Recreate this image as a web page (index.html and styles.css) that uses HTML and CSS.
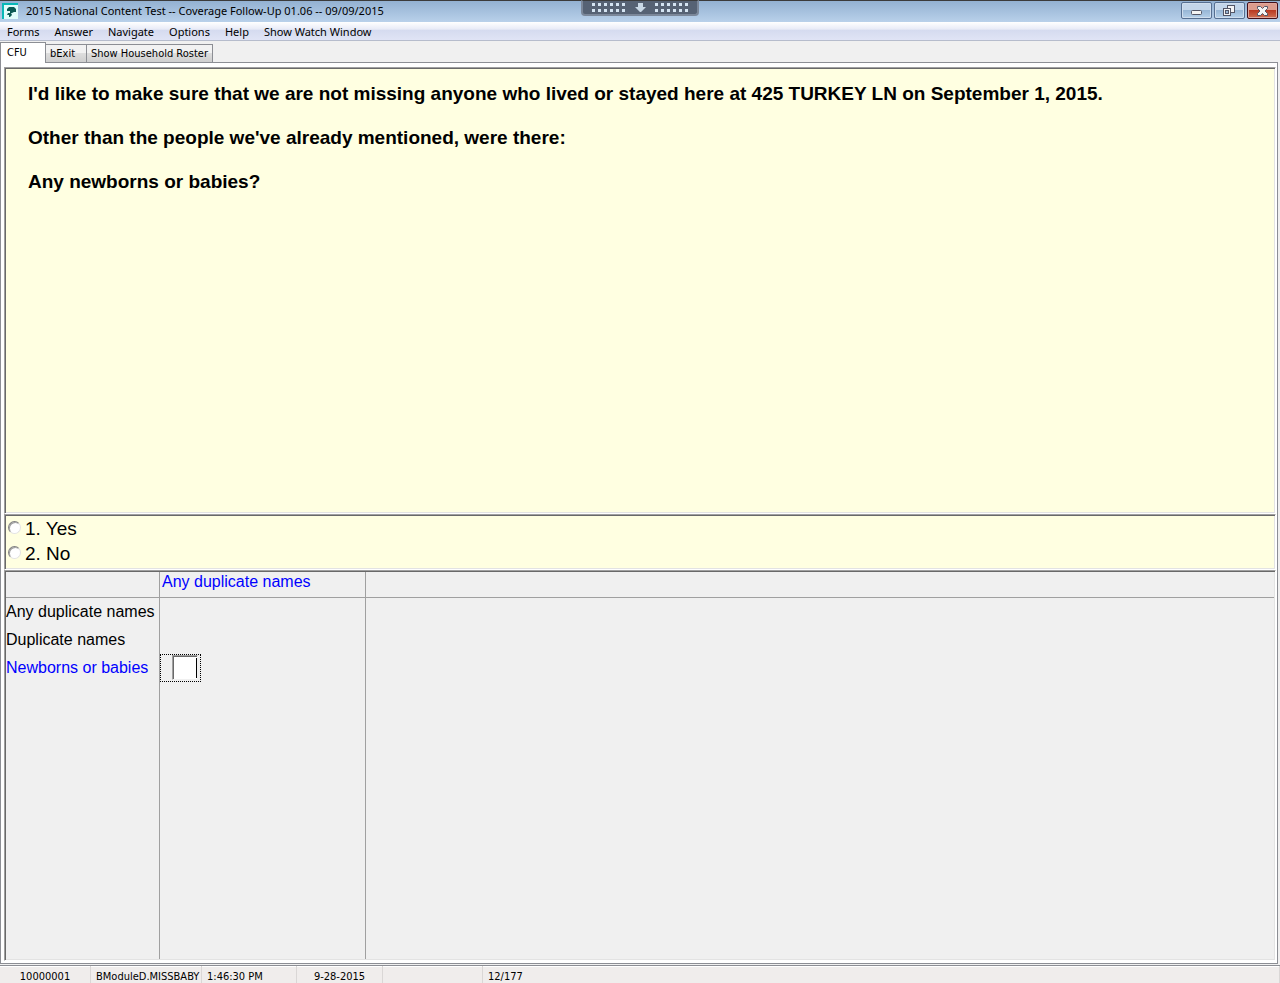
FILE: index.html
```html
<!DOCTYPE html>
<html lang="en">
<head>
    <meta charset="UTF-8">
    <meta name="viewport" content="width=device-width, initial-scale=1.0">
    <title>2015 National Content Test -- Coverage Follow-Up</title>
    <link rel="stylesheet" href="styles.css">
</head>
<body>
    <header class="titlebar">
        <svg class="app-icon" width="16" height="16" viewBox="0 0 16 16">
            <path d="M0 0h16v16H0z" fill="#08b8b8"/>
            <path d="M2 2h14v14H2z" fill="#e0fcfa"/>
            <path d="M7 4h5l2 2v3h-2l-2 1h-2V8H5V6z" fill="#0b5a54"/>
            <path d="M6 10h3l1 2-2 2H7v-2H5z" fill="#0b5a54"/>
        </svg>
        <h1>2015 National Content Test -- Coverage Follow-Up 01.06 -- 09/09/2015</h1>
        <div class="window-buttons">
            <button type="button" aria-label="Minimize">
                <svg width="29" height="15" viewBox="0 0 29 15">
                    <rect x="9.5" y="7.5" width="10" height="4" rx="1" fill="#f4f4f4" stroke="#535666"/>
                </svg>
            </button>
            <button type="button" aria-label="Restore">
                <svg width="29" height="15" viewBox="0 0 29 15">
                    <rect x="12.5" y="2.5" width="7" height="7" fill="#f4f4f4" stroke="#535666"/>
                    <rect x="8.5" y="5.5" width="7" height="7" fill="#f4f4f4" stroke="#535666"/>
                    <rect x="10.5" y="7.5" width="3" height="3" fill="#9ab8d8" stroke="#535666"/>
                </svg>
            </button>
            <button type="button" class="close" aria-label="Close">
                <svg width="29" height="15" viewBox="0 0 29 15">
                    <path d="M9.500 3.500h3l2 2 2-2h3v2l-2.500 2.500 2.500 2.500v2h-3l-2-2-2 2h-3v-2l2.500-2.500-2.500-2.500z" fill="#f4f4f4" stroke="#535666"/>
                </svg>
            </button>
        </div>
        <div class="session-handle">
            <svg width="98" height="12" viewBox="0 0 98 12">
                <path d="M0 3.500h34M0 9.500h34M63 3.500h34M63 9.500h34" stroke="#d5e4f2" stroke-width="3" stroke-dasharray="3 3"/>
                <path d="M46 2h5v4h3l-5 5h-1l-5-5h3z" fill="#c9d8e6"/>
            </svg>
        </div>
    </header>

    <nav class="menu">
        <a href="#">Forms</a>
        <a href="#">Answer</a>
        <a href="#">Navigate</a>
        <a href="#">Options</a>
        <a href="#">Help</a>
        <a href="#">Show Watch Window</a>
    </nav>

    <div class="tabs">
        <button type="button" class="tab active">CFU</button>
        <button type="button" class="tab">bExit</button>
        <button type="button" class="tab">Show Household Roster</button>
    </div>

    <main class="page">
        <section class="panel question">
            <p>I'd like to make sure that we are not missing anyone who lived or stayed here at 425 TURKEY LN on September 1, 2015.</p>
            <p>Other than the people we've already mentioned, were there:</p>
            <p>Any newborns or babies?</p>
        </section>

        <section class="panel answers">
            <label><input type="radio" name="answer" value="1">1. Yes</label>
            <label><input type="radio" name="answer" value="2">2. No</label>
        </section>

        <section class="panel form">
            <table>
                <thead>
                    <tr>
                        <td class="name"></td>
                        <th class="field current">Any duplicate names</th>
                        <td></td>
                    </tr>
                </thead>
                <tbody>
                    <tr>
                        <th>Any duplicate names</th>
                        <td></td>
                        <td></td>
                    </tr>
                    <tr>
                        <th>Duplicate names</th>
                        <td></td>
                        <td></td>
                    </tr>
                    <tr>
                        <th class="current"><label for="newborns">Newborns or babies</label></th>
                        <td><div class="cell"><input type="text" id="newborns" maxlength="1"><span class="caret"></span></div></td>
                        <td></td>
                    </tr>
                    <tr class="rest">
                        <td></td>
                        <td></td>
                        <td></td>
                    </tr>
                </tbody>
            </table>
        </section>
    </main>

    <footer class="status">
        <span class="case">10000001</span>
        <span class="question-name">BModuleD.MISSBABY</span>
        <span class="time">1:46:30 PM</span>
        <span class="date">9-28-2015</span>
        <span class="mode"></span>
        <span class="position">12/177</span>
    </footer>
</body>
</html>
```
FILE: styles.css
```css
* {
    box-sizing: border-box;
}
body {
    margin: 0;
    height: 100vh;
    display: flex;
    flex-direction: column;
    background: #f0f0f0;
    color: black;
    font-family: "Noto Sans", sans-serif;
    font-size: 11px;
}
button {
    font: inherit;
    padding: 0;
}

/* Title bar */
.titlebar {
    position: relative;
    display: flex;
    align-items: center;
    height: 22px;
    padding: 0 2px 2px;
    border-top: 1px solid #3b3b3b;
    background: linear-gradient(#93b1d2, #b9d1ea);
}
.app-icon {
    margin-right: 8px;
}
.titlebar h1 {
    flex: 1;
    margin: 0;
    font-size: 11px;
    font-weight: normal;
}
.window-buttons {
    display: flex;
    gap: 2px;
}
.window-buttons button {
    width: 31px;
    height: 17px;
    border: 1px solid #566f91;
    border-radius: 2px;
    background: linear-gradient(#c3d6ea 45%, #98b7d6 50%, #b5d0e9);
    box-shadow: inset 0 0 0 1px #cfdeee;
}
.window-buttons .close {
    border-color: #43101a;
    background: linear-gradient(#dc9c8d 45%, #b93a22 50%, #cf7053);
    box-shadow: inset 0 0 0 1px #e1a79b;
}
.window-buttons svg {
    display: block;
}
.session-handle {
    position: absolute;
    top: -1px;
    left: 50%;
    width: 118px;
    height: 16px;
    transform: translateX(-50%);
    padding-left: 9px;
    border: 2px solid #7b8799;
    border-top: 1px solid #3b3b3b;
    border-radius: 0 0 4px 4px;
    background: #566274;
}
.session-handle svg {
    display: block;
}

/* Menu and tabs */
.menu {
    display: flex;
    gap: 15px;
    height: 19px;
    padding: 0 7px;
    border-bottom: 1px solid #b6bccc;
    background: linear-gradient(#ffffff, #e8ebf7 40%, #d5dbef 45%, #e0e4f5);
    line-height: 19px;
}
.menu a {
    color: black;
    text-decoration: none;
}
.tabs {
    display: flex;
    align-items: flex-end;
    height: 22px;
    margin-right: 2px;
    box-shadow: inset 0 -1px #8c8e94;
}
.tab {
    height: 19px;
    padding: 0 4px;
    border: 1px solid #8c8e94;
    border-left-width: 0;
    background: linear-gradient(#f2f2f2 50%, #dddddd 50%, #cfcfcf);
    font-family: "DejaVu Sans Condensed", "Noto Sans", sans-serif;
    font-size: 11px;
    text-align: left;
}
.tab:nth-child(2) {
    width: 41px;
}
.tab.active {
    width: 46px;
    height: 21px;
    padding: 0 6px 2px;
    border-left-width: 1px;
    border-bottom: none;
    background: white;
}

/* Panels */
.page {
    flex: 1;
    display: flex;
    flex-direction: column;
    min-height: 0;
    margin-right: 2px;
    padding: 4px 1px 2px 3px;
    border: 1px solid #8c8e94;
    border-top: none;
    background: white;
    font-family: "Liberation Sans", Arial, sans-serif;
}
.panel {
    border: 1px solid;
    border-color: #a0a0a0 white white #a0a0a0;
    box-shadow: inset 1px 1px #696969, inset -1px -1px #e3e3e3;
    padding: 1px;
}
.question {
    flex: 447 1 0;
    padding: 1px 23px;
    background: #ffffe1;
    font-size: 19px;
    font-weight: bold;
    line-height: 22px;
}
.question p {
    margin: 0 0 22px;
}
.question p:first-child {
    margin-top: 14px;
}
.answers {
    display: flex;
    flex-direction: column;
    height: 56px;
    background: #ffffe1;
    font-size: 19px;
    line-height: 25px;
}
.answers label {
    display: flex;
    align-items: center;
    padding-left: 1px;
}
.answers input {
    appearance: none;
    width: 13px;
    height: 13px;
    margin: 0 4px 2px 1px;
    border: 1px solid;
    border-color: #808080 #e3e3e3 #e3e3e3 #808080;
    border-radius: 50%;
    background: white;
    box-shadow: inset 1px 1px #a0a0a0;
}
.form {
    flex: 391 1 0;
    background: #f0f0f0;
}
.form table {
    width: 100%;
    height: 100%;
    border-collapse: separate;
    border-spacing: 0;
    font-size: 16px;
    line-height: 20px;
}
.form th {
    padding: 0;
    font-weight: normal;
    text-align: left;
    white-space: nowrap;
}
.form td {
    padding: 0;
}
.form tr > :first-child,
.form tr > :nth-child(2) {
    border-right: 1px solid #a0a0a0;
}
.form thead tr > * {
    height: 26px;
    border-bottom: 1px solid #a0a0a0;
}
.form thead th {
    padding: 0 2px 4px;
}
.form tbody tr {
    height: 28px;
}
.form .rest {
    height: auto;
}
.form .name {
    width: 154px;
}
.form .field {
    width: 206px;
}
.form .current {
    color: #0000ff;
}
.cell {
    display: flex;
    align-items: center;
    width: 41px;
    height: 28px;
    padding-left: 11px;
    border: 1px dotted black;
}
.cell input {
    width: 26px;
    height: 25px;
    padding: 0 2px;
    border: 1px solid;
    border-color: #a0a0a0 #f0f0f0 #f0f0f0 #a0a0a0;
    border-radius: 0;
    background: white;
    box-shadow: inset 1px 1px #696969;
    font: inherit;
}
.caret {
    width: 1px;
    height: 20px;
    margin-left: -2px;
    background: black;
}

/* Status bar */
.status {
    display: flex;
    height: 18px;
    margin-top: 1px;
    border-top: 1px solid #8c8e94;
    background: #f0edec;
    box-shadow: inset 0 1px white;
    font-family: "DejaVu Sans Condensed", "Noto Sans", sans-serif;
    line-height: 21px;
}
.status span {
    padding-left: 5px;
    border-right: 1px solid #dad7d6;
    white-space: nowrap;
}
.status .case {
    width: 91px;
    padding: 0;
    text-align: center;
}
.status .question-name {
    width: 111px;
}
.status .time {
    width: 95px;
}
.status .date {
    width: 86px;
    padding: 0;
    text-align: center;
}
.status .mode {
    width: 100px;
}
.status .position {
    flex: 1;
}
```
